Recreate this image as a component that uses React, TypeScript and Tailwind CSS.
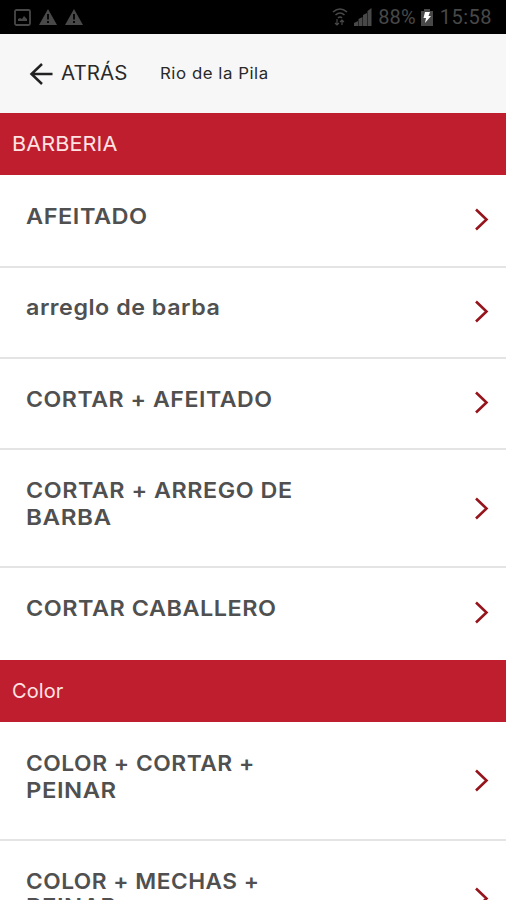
type RowData = { height: string; pad: string; lines: { text: string; stretch: string }[]; arrow: string };

const barberia: RowData[] = [
  { height: 'h-[93px]', pad: 'pt-[28px] leading-[27px]', lines: [{ text: 'AFEITADO', stretch: 'scale-x-[1.07]' }], arrow: 'mt-[33px]' },
  { height: 'h-[91px]', pad: 'pt-[26px] leading-[27px]', lines: [{ text: 'arreglo de barba', stretch: 'scale-x-[1.057]' }], arrow: 'mt-[32px]' },
  { height: 'h-[91px]', pad: 'pt-[27px] leading-[27px]', lines: [{ text: 'CORTAR + AFEITADO', stretch: 'scale-x-[1.051]' }], arrow: 'mt-[32px]' },
  {
    height: 'h-[118px]',
    pad: 'pt-[27px] leading-[27px]',
    lines: [
      { text: 'CORTAR + ARREGO DE', stretch: 'scale-x-[1.06]' },
      { text: 'BARBA', stretch: 'scale-x-[1.1]' },
    ],
    arrow: 'mt-[47px]',
  },
  { height: 'h-[92px]', pad: 'pt-[27px] leading-[27px]', lines: [{ text: 'CORTAR CABALLERO', stretch: 'scale-x-[1.063]' }], arrow: 'mt-[33px]' },
];

const color: RowData[] = [
  {
    height: 'h-[119px]',
    pad: 'pt-[28px] leading-[27px]',
    lines: [
      { text: 'COLOR + CORTAR +', stretch: 'scale-x-[1.036]' },
      { text: 'PEINAR', stretch: 'scale-x-[1.084]' },
    ],
    arrow: 'mt-[47px]',
  },
  {
    height: 'h-[118px]',
    pad: 'pt-[28px] leading-[25px]',
    lines: [
      { text: 'COLOR + MECHAS +', stretch: 'scale-x-[1.03]' },
      { text: 'PEINAR', stretch: 'scale-x-[1.084]' },
    ],
    arrow: 'mt-[46px]',
  },
];

function Row({ row, last }: { row: RowData; last: boolean }) {
  return (
    <li className={`flex shrink-0 justify-between bg-white pl-[26px] pr-[17px] ${row.height} ${last ? '' : 'border-b-2 border-[#e4e4e4]'}`}>
      <div className={`text-[22px] font-semibold text-[#505050] ${row.pad}`}>
        {row.lines.map((l) => (
          <div key={l.text} className={`w-max origin-left whitespace-nowrap tracking-[0.5px] ${l.stretch}`}>{l.text}</div>
        ))}
      </div>
      <svg className={`h-[23px] w-[15px] shrink-0 ${row.arrow}`} viewBox="0 0 15 23" fill="none" stroke="#96141c" strokeWidth="2.6">
        <path d="M2 1.5 12.5 11.5 2 21.5" />
      </svg>
    </li>
  );
}

function Section({ title, rows, stretch }: { title: string; rows: RowData[]; stretch: string }) {
  return (
    <section className="shrink-0">
      <h2 className="flex h-[62px] items-center bg-[#be1e2d] pl-3 text-[20px] font-normal tracking-[0.1px] text-[#ffe3e3]">
        <span className={`origin-left ${stretch}`}>{title}</span>
      </h2>
      <ul>{rows.map((r, i) => <Row key={i} row={r} last={i === rows.length - 1} />)}</ul>
    </section>
  );
}

function Warning() {
  return (
    <svg className="h-[17px] w-[18px]" viewBox="0 0 18 17">
      <path d="M9 0 18 16H0Z" fill="#484848" />
      <path d="M9 5v5.5M9 12v2" stroke="#000" strokeWidth="1.8" />
    </svg>
  );
}

export default function App() {
  return (
    <div className="flex h-[900px] w-[506px] flex-col overflow-hidden bg-white font-[Inter,sans-serif]">
      <div className="flex h-[34px] shrink-0 items-center justify-between bg-black px-[14px]">
        <div className="flex items-center gap-[8px]">
          <svg className="h-[17px] w-[17px]" viewBox="0 0 17 17">
            <rect x="1" y="1" width="15" height="15" rx="1.5" fill="none" stroke="#484848" strokeWidth="1.8" />
            <path d="M4 12V10l2-1 2 1 2-3 3 3v2Z" fill="#484848" />
          </svg>
          <Warning />
          <Warning />
        </div>
        <div className="flex items-center font-[Roboto,sans-serif] text-[20px] leading-none text-[#484848]">
          <svg className="h-[18px] w-[16px]" viewBox="0 0 16 18" fill="none" stroke="#484848" strokeWidth="1.6">
            <path d="M1 4q7-6 14 0M3.5 7q4.500-4 9 0M6 10q2-2 4 0" />
            <path d="M5 11v6M3 15l2 2 2-2M10 17v-5M8 14l2-2 2 2" strokeWidth="1.2" />
          </svg>
          <svg className="ml-[6px] h-[18px] w-[18px]" viewBox="0 0 18 18" fill="#484848">
            <path d="M0 18v-3l4-2v5ZM4.500 18v-7l4-2v9ZM9 18V7l4-2v13ZM13.500 18V3l4-3v18Z" />
          </svg>
          <span className="ml-[6px] tracking-[0.1px]">88%</span>
          <svg className="ml-[5px] h-[17px] w-[12px]" viewBox="0 0 12 17">
            <path d="M0 2h3V0h6v2h3v15H0Z" fill="#484848" />
            <path d="M4 3h5L7.500 7H10L4 14l1-5H2.500Z" fill="#fff" />
          </svg>
          <span className="ml-[7px] tracking-[0.5px]">15:58</span>
        </div>
      </div>
      <header className="flex h-[79px] shrink-0 items-center bg-[#f7f7f7] pl-[29px] text-[#292929]">
        <svg className="h-[22px] w-[24px]" viewBox="0 0 24 22" fill="none" stroke="#222" strokeWidth="2.5">
          <path d="M23.500 11H2.500M13 1 2.500 11 13 21" />
        </svg>
        <span className="ml-[8px] w-[99px] origin-left scale-x-[1.05] pt-px text-[19.500px] tracking-[0.1px]">ATRÁS</span>
        <span className="origin-left scale-x-[1.085] text-[15.500px] tracking-[0.5px]">Rio de la Pila</span>
      </header>
      <Section title="BARBERIA" rows={barberia} stretch="scale-x-[1.08]" />
      <Section title="Color" rows={color} stretch="scale-x-[1]" />
    </div>
  );
}
